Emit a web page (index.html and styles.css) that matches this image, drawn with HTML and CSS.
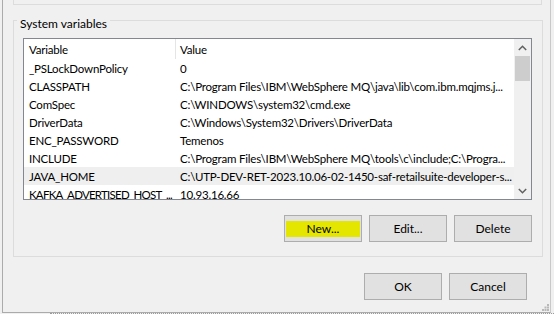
FILE: index.html
```html
<!DOCTYPE html>
<html lang="en">
<head>
  <meta charset="UTF-8">
  <title>Environment Variables</title>
  <link rel="stylesheet" href="styles.css">
</head>
<body>
  <div class="page">
    <div class="dialog">
      <!-- bottom end of the "User variables" group, scrolled off above -->
      <div class="group-tail"></div>

      <div class="group">
        <span class="legend">System variables</span>

        <div class="listbox">
          <div class="list-body">
            <div class="list-head">
              <div class="col col-name">Variable</div>
              <div class="col col-value">Value</div>
            </div>
            <div class="row"><div class="col col-name">_PSLockDownPolicy</div><div class="col col-value">0</div></div>
            <div class="row"><div class="col col-name">CLASSPATH</div><div class="col col-value">C:\Program Files\IBM\WebSphere MQ\java\lib\com.ibm.mqjms.j...</div></div>
            <div class="row"><div class="col col-name">ComSpec</div><div class="col col-value">C:\WINDOWS\system32\cmd.exe</div></div>
            <div class="row"><div class="col col-name">DriverData</div><div class="col col-value">C:\Windows\System32\Drivers\DriverData</div></div>
            <div class="row"><div class="col col-name">ENC_PASSWORD</div><div class="col col-value">Temenos</div></div>
            <div class="row"><div class="col col-name">INCLUDE</div><div class="col col-value">C:\Program Files\IBM\WebSphere MQ\tools\c\include;C:\Progra...</div></div>
            <div class="row row-hover"><div class="col col-name">JAVA_HOME</div><div class="col col-value">C:\UTP-DEV-RET-2023.10.06-02-1450-saf-retailsuite-developer-s...</div></div>
            <div class="row"><div class="col col-name tight">KAFKA_ADVERTISED_HOST_...</div><div class="col col-value">10.93.16.66</div></div>
          </div>
          <div class="scrollbar">
            <div class="sb-arrow">
              <svg width="9" height="6" viewBox="0 0 9 6"><path d="M0.8 5 L4.5 1.3 L8.2 5" fill="none" stroke="#606060" stroke-width="1.5"/></svg>
            </div>
            <div class="sb-thumb"></div>
            <div class="sb-track"></div>
            <div class="sb-arrow">
              <svg width="9" height="6" viewBox="0 0 9 6"><path d="M0.8 1 L4.5 4.7 L8.2 1" fill="none" stroke="#606060" stroke-width="1.5"/></svg>
            </div>
          </div>
        </div>

        <div class="button-row">
          <button class="btn"><span class="mark">New...</span></button>
          <button class="btn">Edit...</button>
          <button class="btn">Delete</button>
        </div>
      </div>

      <div class="button-row dialog-buttons">
        <button class="btn">OK</button>
        <button class="btn">Cancel</button>
      </div>

      <svg class="grip" width="7" height="7" viewBox="0 0 7 7">
        <rect x="5" y="0" width="2" height="2" fill="#b8b8b8"/>
        <rect x="2.5" y="2.5" width="2" height="2" fill="#b8b8b8"/>
        <rect x="5" y="2.5" width="2" height="2" fill="#b8b8b8"/>
        <rect x="0" y="5" width="2" height="2" fill="#b8b8b8"/>
        <rect x="2.5" y="5" width="2" height="2" fill="#b8b8b8"/>
        <rect x="5" y="5" width="2" height="2" fill="#b8b8b8"/>
      </svg>
    </div>
    <div class="below"></div>
  </div>
</body>
</html>
```

FILE: styles.css
```css
* {
  box-sizing: border-box;
  font-family: Lato, 'Noto Sans', sans-serif;
}

body {
  margin: 0;
  background-color: #f0f0f0;
  color: #000;
  font-size: 11.5px;
  letter-spacing: -0.2px;
}

.page {
  width: 554px;
  height: 314px;
  overflow: hidden;
  background-color: #f0f0f0;
}

.dialog {
  position: relative;
  margin-left: 2px;
  width: 549px;
  height: 313px;
  border-left: 1px solid #ababab;
  border-right: 1px solid #c8c8c8;
  border-bottom: 1px solid #ababab;
  display: flex;
  flex-direction: column;
}

.group-tail {
  margin: 0 8px 0 10px;
  height: 5px;
  border: 1px solid #dcdcdc;
  border-top: none;
}

.group {
  position: relative;
  margin: 15px 7px 0 10px;
  height: 237px;
  border: 1px solid #dcdcdc;
  padding: 17px 10px 0 9px;
}

.legend {
  position: absolute;
  top: -5px;
  left: 3px;
  padding: 0 3px;
  background-color: #f0f0f0;
  line-height: 16px;
  font-size: 12px;
  letter-spacing: 0;
}

.listbox {
  height: 162px;
  border: 1px solid #828790;
  background-color: #fff;
  display: flex;
}

.list-body {
  flex: 1;
  overflow: hidden;
}

.list-head,
.row {
  display: flex;
  white-space: nowrap;
}

.list-head {
  height: 20px;
  line-height: 21px;
}

.list-head .col-name {
  border-right: 1px solid #e5e5e5;
}

.row {
  height: 18px;
  line-height: 19px;
}

.row-hover {
  background-color: #efefef;
}

.col {
  overflow: hidden;
  padding-left: 5px;
}

.col-name {
  width: 152px;
  flex: none;
}

.col-name.tight {
  letter-spacing: -0.75px;
}

.col-value {
  padding-left: 4px;
  flex: 1;
}

.scrollbar {
  width: 17px;
  background-color: #f0f0f0;
  display: flex;
  flex-direction: column;
}

.sb-arrow {
  height: 17px;
  display: flex;
  align-items: center;
  justify-content: center;
}

.sb-thumb {
  height: 25px;
  margin: 0 1px;
  background-color: #cdcdcd;
}

.sb-track {
  flex: 1;
}

.button-row {
  display: flex;
  justify-content: flex-end;
  gap: 7px;
  margin-top: 15px;
}

.btn {
  width: 78px;
  height: 27px;
  padding: 0 1px;
  border: 1px solid #adadad;
  background-color: #e1e1e1;
  font-size: 12px;
  letter-spacing: 0;
  color: #000;
}

.mark {
  display: block;
  height: 16px;
  line-height: 16px;
  background-color: #e4e600;
}

.dialog-buttons {
  margin: 16px 23px 0 0;
  gap: 7px;
}

.grip {
  position: absolute;
  right: 1px;
  bottom: 1px;
}

.below {
  margin-left: 50px;
  height: 1px;
  border-top: 1px dotted #9a9a9a;
}
```
